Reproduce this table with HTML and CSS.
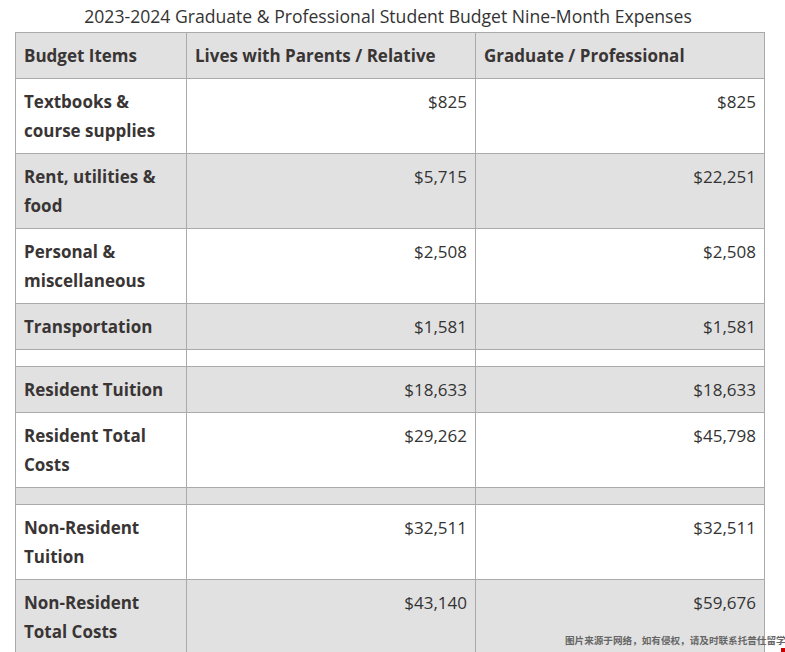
FILE: index.html
```html
<!DOCTYPE html>
<html lang="en">
<head>
<meta charset="utf-8">
<title>2023-2024 Graduate &amp; Professional Student Budget</title>
<link rel="stylesheet" href="styles.css">
</head>
<body>
<div class="page">
  <table class="budget">
    <caption>2023-2024 Graduate &amp; Professional Student Budget Nine-Month Expenses</caption>
    <colgroup>
      <col class="c1"><col class="c2"><col class="c3">
    </colgroup>
    <thead>
      <tr><th>Budget Items</th><th>Lives with Parents / Relative</th><th>Graduate / Professional</th></tr>
    </thead>
    <tbody>
      <tr><th>Textbooks &amp; course supplies</th><td>$825</td><td>$825</td></tr>
      <tr><th>Rent, utilities &amp; food</th><td>$5,715</td><td>$22,251</td></tr>
      <tr><th>Personal &amp; miscellaneous</th><td>$2,508</td><td>$2,508</td></tr>
      <tr><th>Transportation</th><td>$1,581</td><td>$1,581</td></tr>
      <tr class="spacer"><th></th><td></td><td></td></tr>
      <tr><th>Resident Tuition</th><td>$18,633</td><td>$18,633</td></tr>
      <tr><th>Resident Total Costs</th><td>$29,262</td><td>$45,798</td></tr>
      <tr class="spacer"><th></th><td></td><td></td></tr>
      <tr><th>Non-Resident Tuition</th><td>$32,511</td><td>$32,511</td></tr>
      <tr><th>Non-Resident Total Costs</th><td>$43,140</td><td>$59,676</td></tr>
    </tbody>
  </table>
  <div class="watermark">图片来源于网络，如有侵权，请及时联系托普仕留学删除</div>
  <div class="mark"></div>
</div>
</body>
</html>
```
FILE: styles.css
```css
html, body {
  margin: 0;
  padding: 0;
  overflow: hidden;
  background: #fff;
}
body {
  font-family: "Open Sans", "Noto Sans", "Noto Sans CJK SC", sans-serif;
  color: #333;
}
.page {
  position: relative;
  width: 785px;
  height: 652px;
  overflow: hidden;
  padding-left: 15px;
  box-sizing: border-box;
}
.budget {
  border-collapse: collapse;
  width: 750px;
  table-layout: fixed;
  font-size: 17px;
  line-height: 29px;
}
.budget caption {
  font-size: 17.6px;
  line-height: 33px;
  height: 32px;
  text-align: center;
  margin-left: -4px;
  color: #333;
}
.c1 { width: 171px; }
.c2 { width: 289px; }
.c3 { width: 289px; }
.budget th, .budget td {
  border: 1px solid #aaa;
  padding: 8px 8px;
  vertical-align: top;
}
.budget th {
  text-align: left;
  font-weight: 700;
  color: #3a3535;
}
.budget thead th {
  background: #e1e1e1;
}
.budget td {
  text-align: right;
  font-weight: 400;
}
.budget tbody tr:nth-child(even) {
  background: #e1e1e1;
}
.budget tr.spacer th, .budget tr.spacer td {
  padding: 8px;
  line-height: 0;
  height: 0;
}
.watermark {
  position: absolute;
  left: 565px;
  top: 634px;
  font-size: 9.6px;
  line-height: 13px;
  font-weight: 700;
  color: #666;
  white-space: nowrap;
  font-family: "Noto Sans CJK SC", sans-serif;
}
.mark {
  position: absolute;
  left: 781px;
  top: 648px;
  width: 4px;
  height: 4px;
  background: #c00;
}
```
